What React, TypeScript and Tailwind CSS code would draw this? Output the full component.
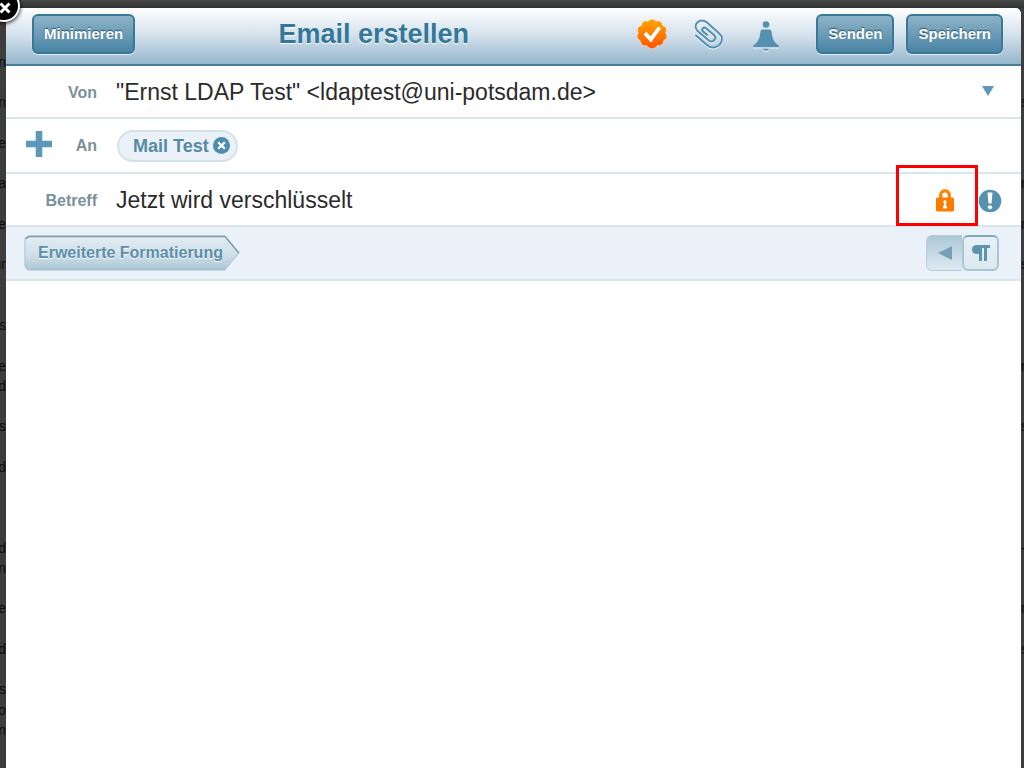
import React from 'react';

const leftEdge = [
  'n', '', 'n', '', 'e', '', 'a', '', 'e', '', 'ur', '', '', 's', '', 'e', 'd', '', 's', '', 'd', '', '', '', 'd',
  'n', '', 'e', '', 'd', '', 's', 'o', 'n',
];
const rightEdge = [
  '', '', 's', '', '', '', 'r', '', 'r', '', 's', '', '', '', '', 'r', '', '', 's', '', '', '', '', '', '-', '', '',
  'r', '', 's', '', '', '', '',
];

function BackdropEdge({ letters, side }: { letters: string[]; side: 'left' | 'right' }) {
  const align = side === 'left' ? 'w-[6px] items-end' : 'w-[3px] items-start';
  return (
    <div
      aria-hidden="true"
      className={`flex shrink-0 flex-col overflow-hidden bg-[#3c3d3c] pt-11 pb-7 text-[14px] text-[#0c0c0c] ${align}`}
    >
      {letters.map((letter, i) => (
        <span key={i} className="flex-1 leading-5">
          {letter}
        </span>
      ))}
    </div>
  );
}

function HeaderButton({ children }: { children: React.ReactNode }) {
  return (
    <button
      type="button"
      className="h-10 shrink-0 rounded-md border-2 border-[#3b7798] bg-linear-to-b from-[#8eb3c8] to-[#4884a4] px-[10px] text-[15px] leading-5 font-bold text-white shadow-[0_1px_1px_#e4eef4] [text-shadow:0_-1px_1px_#26506a]"
    >
      {children}
    </button>
  );
}

function VerifiedIcon() {
  return (
    <svg viewBox="0 0 32 32" className="size-8">
      <defs>
        <linearGradient id="seal" x1="0" y1="0" x2="0" y2="1">
          <stop offset="0" stopColor="#ffa800" />
          <stop offset="1" stopColor="#ff5200" />
        </linearGradient>
      </defs>
      <path
        fill="url(#seal)"
        stroke="#f4e3d8"
        strokeWidth=".6"
        d="M16 1.2Q18.2 1.2 20 3.2Q23 2.300 24.700 3.700Q26.300 5 26.400 7.500Q29.300 8.300 30.200 10.400Q31 12.500 29.600 14.900Q31.500 17.400 30.800 19.500Q30.200 21.600 27.700 22.700Q27.500 25.700 25.700 27Q23.900 28.200 21.200 27.500Q19.200 30.800 16 30.800Q12.800 30.800 10.800 27.500Q8.100 28.200 6.300 27Q4.500 25.700 4.300 22.700Q1.800 21.600 1.200 19.500Q.5 17.400 2.400 14.900Q1 12.500 1.800 10.400Q2.700 8.300 5.600 7.500Q5.700 5 7.300 3.700Q9 2.300 12 3.200Q13.800 1.200 16 1.200Z"
      />
      <path fill="#fff" d="M7.500 16.500L10.500 13.800L14.500 18.200L22 8.500L25.200 10.200L15 24.500Z" />
    </svg>
  );
}

function ClipIcon() {
  return (
    <svg viewBox="0 0 32 32" className="size-8" fill="none" strokeLinecap="round" strokeLinejoin="round">
      <g transform="translate(0 1)" stroke="#eef4f8" strokeWidth="2">
        <path d="M3 17.500L14.500 27.500C18.500 31 24 29.700 26.700 26.700C30 23 29.500 18.500 26.200 15.500L13.700 4.300C10.500 1.500 6.500 2 4.300 4.500C2 7 2 10.500 4.800 13.200L15.500 22.300C17.500 24 20 23.600 21.300 22C22.800 20.300 22.500 18.300 20.700 16.700L13 10" />
      </g>
      <path
        stroke="#5690ae"
        strokeWidth="2"
        d="M3 17.500L14.500 27.500C18.500 31 24 29.700 26.700 26.700C30 23 29.500 18.500 26.200 15.500L13.700 4.300C10.500 1.500 6.500 2 4.300 4.500C2 7 2 10.500 4.800 13.200L15.500 22.300C17.500 24 20 23.600 21.300 22C22.800 20.300 22.500 18.300 20.700 16.700L13 10.200C11.800 9.300 10.500 9.400 9.700 10.300C8.800 11.400 9.100 12.500 10.100 13.400L14 16.800"
      />
    </svg>
  );
}

function BellIcon() {
  return (
    <svg viewBox="0 0 32 32" className="size-8">
      <g fill="#e4eef4" transform="translate(0 1)">
        <path d="M10.500 9.500H21.500C22 18 24 22 29 26.500V27.500H3V26.500C8 22 10 18 10.500 9.500Z" />
        <path d="M13 29H19Q18.500 31 16 31Q13.500 31 13 29Z" />
      </g>
      <g fill="#5690b0">
        <circle cx="16" cy="4.500" r="3.300" />
        <path d="M12.500 9.500H19.500Q21.300 9.500 21.600 11.500C22.200 18.500 24 22.300 28.800 25.500V27.300H3.200V25.500C8 22.300 9.800 18.500 10.400 11.500Q10.700 9.500 12.500 9.500Z" />
        <path d="M13.300 28.800H18.700Q18.300 30.700 16 30.700Q13.700 30.700 13.300 28.800Z" />
      </g>
    </svg>
  );
}

const row = 'flex shrink-0 items-center border-b-2 border-[#dae6eb]';
const label = 'w-[91px] shrink-0 text-right text-[16px] leading-6 font-bold text-[#7b909b]';

export default function App() {
  return (
    <div className="relative flex h-screen flex-col overflow-hidden bg-[#343635] font-['Liberation_Sans',Arial,sans-serif]">
      <div className="h-2 shrink-0 bg-linear-to-b from-[#494b4a] to-[#303231]" />
      <button
        type="button"
        aria-label="Schließen"
        className="absolute -top-[10px] -left-3 z-10 flex size-8 items-center justify-center rounded-full border-2 border-white bg-black pt-1 pl-[2px] shadow-[0_1px_4px_#000]"
      >
        <svg viewBox="0 0 12 12" className="size-3" stroke="#fff" strokeWidth="3">
          <path d="M1.500 1.500L10.500 10.500M10.500 1.500L1.500 10.500" />
        </svg>
      </button>

      <div className="flex min-h-0 flex-1">
        <BackdropEdge letters={leftEdge} side="left" />

        <main className="flex min-w-0 flex-1 flex-col rounded-tr-md bg-white">
          <header className="flex h-[58px] shrink-0 items-start rounded-tr-md border-b-2 border-[#457f9b] bg-linear-to-b from-white via-[#d3e0eb] to-[#94b6cc] pt-[6px] pr-[18px] pl-[26px]">
            <HeaderButton>Minimieren</HeaderButton>
            <h1 className="flex-1 pr-6 text-center text-[27px] leading-10 font-bold text-[#33789a] [text-shadow:0_1px_1px_#fff]">
              Email erstellen
            </h1>
            <div className="mr-[34px] flex gap-[25px] pt-[2px]">
              <button type="button" aria-label="Signieren">
                <VerifiedIcon />
              </button>
              <button type="button" aria-label="Anhang">
                <ClipIcon />
              </button>
              <button type="button" aria-label="Benachrichtigung" className="pt-1">
                <BellIcon />
              </button>
            </div>
            <div className="flex gap-3">
              <HeaderButton>Senden</HeaderButton>
              <HeaderButton>Speichern</HeaderButton>
            </div>
          </header>

          <div className={`${row} relative h-[53px] pt-[2px]`}>
            <label htmlFor="from" className={label}>
              Von
            </label>
            <select
              id="from"
              className="ml-[19px] h-full min-w-0 flex-1 appearance-none bg-transparent text-[23px] text-[#2b2b2b] outline-none"
            >
              <option>{'"Ernst LDAP Test" <ldaptest@uni-potsdam.de>'}</option>
            </select>
            <svg viewBox="0 0 12 10" className="pointer-events-none absolute top-5 right-[27px] h-[10px] w-3">
              <path d="M0 0H12L6 10Z" fill="#5b98ba" />
            </svg>
          </div>

          <div className={`${row} relative h-[55px]`}>
            <button type="button" aria-label="Empfänger hinzufügen" className="absolute top-3 left-5">
              <svg viewBox="0 0 26 26" className="size-[26px]">
                <path d="M9.700 0H16.300V9.700H26V16.300H16.300V26H9.700V16.300H0V9.700H9.700Z" fill="#5b98ba" />
              </svg>
            </button>
            <span className={label}>An</span>
            <span className="ml-5 flex h-8 items-center gap-1 rounded-full border-2 border-[#d3e2e8] bg-[#ebf1f9] pr-[6px] pl-[14px] text-[18px] leading-6 font-bold text-[#568ba4]">
              Mail Test
              <button type="button" aria-label="Mail Test entfernen">
                <svg viewBox="0 0 18 18" className="size-[17px]">
                  <circle cx="9" cy="9" r="9" fill="#4e8db0" />
                  <path d="M5.500 5.500L12.500 12.500M12.500 5.500L5.500 12.500" stroke="#fff" strokeWidth="2.400" />
                </svg>
              </button>
            </span>
          </div>

          <div className={`${row} h-[53px] pt-[2px] pr-[19px]`}>
            <label htmlFor="subject" className={label}>
              Betreff
            </label>
            <input
              id="subject"
              type="text"
              defaultValue="Jetzt wird verschlüsselt"
              className="ml-[19px] h-full min-w-0 flex-1 bg-transparent text-[23px] text-[#2b2b2b] outline-none"
            />
            <div className="relative mr-6 flex">
              <button type="button" aria-label="Verschlüsseln">
                <svg viewBox="0 0 18 23" className="h-[23px] w-[18px]">
                  <path d="M4.700 10V6C4.700 .5 13.300 .5 13.300 6V10" fill="none" stroke="#ff8200" strokeWidth="3.200" />
                  <rect y="8.500" width="18" height="14" rx="1.500" fill="#ff7a00" />
                  <path d="M9 11A2 2 0 0 1 10 14.500V16.500H11V19.500H7V16.500H8V14.500A2 2 0 0 1 9 11Z" fill="#fff" />
                </svg>
              </button>
              <span className="pointer-events-none absolute -top-6 -right-6 h-[61px] w-[82px] border-3 border-[#ff0000]" />
            </div>
            <button type="button" aria-label="Priorität">
              <svg viewBox="0 0 24 24" className="size-6">
                <circle cx="12" cy="12" r="11.300" fill="#5591b1" />
                <path d="M9.500 3.500H14.500L13.500 14.500H10.500Z" fill="#fff" />
                <circle cx="12" cy="18.300" r="2.100" fill="#fff" />
              </svg>
            </button>
          </div>

          <div className={`${row} h-[54px] justify-between bg-[#ebf1f8] pr-[22px] pl-[18px]`}>
            <button type="button" className="relative flex h-9 items-center pr-[17px] pl-[14px]">
              <svg viewBox="0 0 216 36" preserveAspectRatio="none" className="absolute inset-0 size-full">
                <defs>
                  <linearGradient id="tag" x1="0" y1="0" x2="0" y2="1">
                    <stop offset="0" stopColor="#e3edf3" />
                    <stop offset=".55" stopColor="#d0dfe9" />
                    <stop offset="1" stopColor="#a9c6d6" />
                  </linearGradient>
                </defs>
                <path d="M6 1H201L215 18L201 35H6Q1 35 1 30V6Q1 1 6 1Z" fill="url(#tag)" stroke="#a5c0cd" />
                <path d="M2 4Q3 1.500 6 1.500H201L215 18" fill="none" stroke="#8199a5" strokeWidth="1.400" />
              </svg>
              <span className="relative text-[16px] leading-6 font-bold text-[#5b8fa8] [text-shadow:0_1px_1px_#fff]">
                Erweiterte Formatierung
              </span>
            </button>
            <div className="flex h-9">
              <button
                type="button"
                aria-label="Schreibrichtung"
                className="flex w-9 items-center justify-center rounded-l-md border border-r-0 border-[#b6cedb] bg-linear-to-b from-[#abc8d8] to-[#dfe9f0]"
              >
                <svg viewBox="0 0 14 14" className="size-[14px]">
                  <path d="M14 0V14L0 7Z" fill="#74a1b8" />
                </svg>
              </button>
              <button
                type="button"
                aria-label="Absatz"
                className="flex w-[37px] items-center justify-center rounded-md border-2 border-[#a9c6d5] border-t-[#83a9bc] bg-linear-to-b from-[#e8f0f5] to-[#dce8ef]"
              >
                <svg viewBox="0 0 18 16" className="h-4 w-[18px]">
                  <path d="M5 0H18V3H15V16H12V3H10V16H7V9H5Q0 9 0 4.500Q0 0 5 0Z" fill="#5d95b1" />
                </svg>
              </button>
            </div>
          </div>

          <textarea aria-label="Nachricht" className="min-h-0 w-full flex-1 resize-none bg-white p-4 outline-none" />
        </main>

        <BackdropEdge letters={rightEdge} side="right" />
      </div>
    </div>
  );
}
